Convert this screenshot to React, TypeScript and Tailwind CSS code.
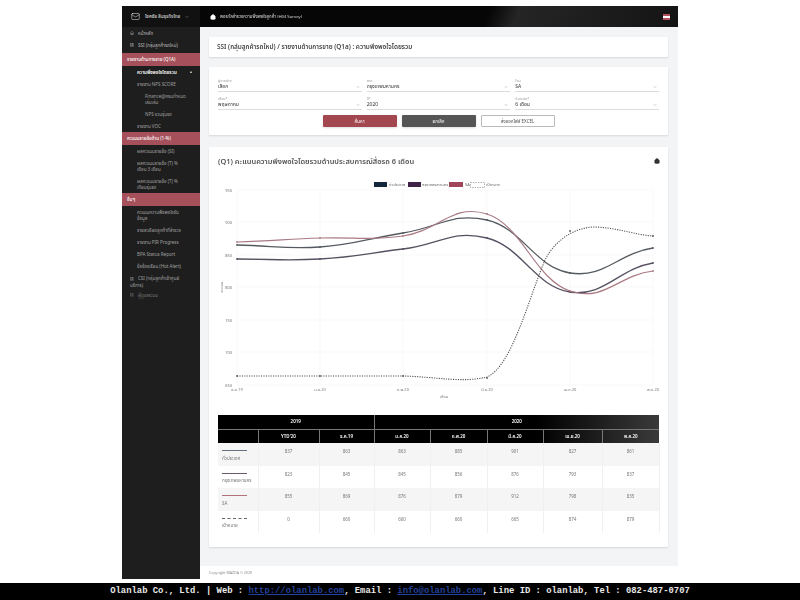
import { Home, ChevronDown, LayoutDashboard, Mail } from "lucide-react";

const font = "font-['Noto_Sans','Noto_Sans_Thai','Liberation_Sans',sans-serif]";

type Series = { color: string; width: number; dash?: string; pts: number[]; path?: string };

const xs = [237, 320, 403, 487, 570, 653];
const series: Series[] = [
  { color: "#555a60", width: 1.3, pts: [245, 247, 233, 220, 273, 248] },
  { color: "#575060", width: 1.3, pts: [259, 259, 249, 238, 292, 263] },
  { color: "#aa7a84", width: 1.2, pts: [242, 238, 236, 214, 291, 271] },
  {
    color: "#555555",
    width: 1.1,
    dash: "1.2 1.2",
    pts: [376, 376, 376, 378, 231, 236],
    path: "M237 376 L403 376 C438 377 462 383 487 377 C512 366 528 300 545 260 C555 240 574 228 593 227 C615 227 635 235 653 236",
  },
];

const yTicks = [
  { y: 190, label: "950" },
  { y: 222, label: "900" },
  { y: 255, label: "850" },
  { y: 287, label: "800" },
  { y: 320, label: "750" },
  { y: 352, label: "700" },
  { y: 385, label: "650" },
];
const xLabels = ["ธ.ค.19", "ม.ค.20", "ก.พ.20", "มี.ค.20", "เม.ย.20", "พ.ค.20"];

function curve(pts: number[]): string {
  let d = `M${xs[0]} ${pts[0]}`;
  for (let i = 0; i < pts.length - 1; i++) {
    const prev = pts[Math.max(i - 1, 0)];
    const next = pts[Math.min(i + 2, pts.length - 1)];
    const t = 0.2;
    const c1y = pts[i] + (pts[i + 1] - prev) * t;
    const c2y = pts[i + 1] - (next - pts[i]) * t;
    const dx = (xs[i + 1] - xs[i]) * 0.42;
    d += ` C${xs[i] + dx} ${c1y} ${xs[i + 1] - dx} ${c2y} ${xs[i + 1]} ${pts[i + 1]}`;
  }
  return d;
}

function Chart() {
  return (
    <svg viewBox="218 176 450 232" className="block h-[232px] w-[450px]">
      {yTicks.map((t) => (
        <g key={t.y}>
          <line x1={237} x2={653} y1={t.y} y2={t.y} stroke="#f2f2f2" strokeWidth={0.5} />
          <text x={232} y={t.y + 1.5} textAnchor="end" fontSize={4} fill="#777">
            {t.label}
          </text>
        </g>
      ))}
      {xs.map((x, i) => (
        <g key={x}>
          <line x1={x} x2={x} y1={190} y2={385} stroke="#f2f2f2" strokeWidth={0.5} />
          <text x={x} y={391} textAnchor="middle" fontSize={4} fill="#777">
            {xLabels[i]}
          </text>
        </g>
      ))}
      <text x={444} y={398} textAnchor="middle" fontSize={4} fill="#777">
        เดือน
      </text>
      <text x={223} y={287} textAnchor="middle" fontSize={4} fill="#777" transform="rotate(-90 223 287)">
        คะแนน
      </text>

      <rect x={374} y={182} width={13} height={5} fill="#14283c" />
      <text x={389} y={186} fontSize={4} fill="#666">ทั่วประเทศ</text>
      <rect x={408} y={182} width={13} height={5} fill="#3f2347" />
      <text x={422} y={186} fontSize={4} fill="#666">กรุงเทพมหานคร</text>
      <rect x={449} y={182} width={14} height={5} fill="#a1465a" />
      <text x={465} y={186} fontSize={4} fill="#666">SA</text>
      <rect x={470.5} y={182.5} width={14} height={5} fill="none" stroke="#666" strokeWidth={0.5} strokeDasharray="1.5 1" />
      <text x={486} y={186} fontSize={4} fill="#666">เป้าหมาย</text>

      {series.map((s) => (
        <g key={s.color + s.pts[0]}>
          <path d={s.path ?? curve(s.pts)} fill="none" stroke={s.color} strokeWidth={s.width} strokeDasharray={s.dash} />
          {s.pts.map((p, i) => (
            <circle key={xs[i]} cx={xs[i]} cy={p} r={0.9} fill={s.color} />
          ))}
        </g>
      ))}
    </svg>
  );
}

const rows = [
  { name: "ทั่วประเทศ", line: "border-[#667080]", vals: [837, 863, 863, 885, 901, 827, 861] },
  { name: "กรุงเทพมหานคร", line: "border-[#665a70]", vals: [823, 845, 845, 856, 876, 793, 837] },
  { name: "SA", line: "border-[#b0707c]", vals: [855, 869, 876, 879, 912, 798, 835] },
  { name: "เป้าหมาย", line: "border-dashed border-[#666]", vals: [0, 660, 660, 660, 665, 874, 879] },
];

const colWidths = ["w-[40px]", "w-[61px]", "w-[55px]", "w-[56px]", "w-[57px]", "w-[56px]", "w-[59px]", "w-[57px]"];

function ScoreTable() {
  const heads = ["YTD'20", "ธ.ค.19", "ม.ค.20", "ก.พ.20", "มี.ค.20", "เม.ย.20", "พ.ค.20"];
  return (
    <table className="w-[441px] table-fixed border-collapse text-center text-[4.5px]">
      <colgroup>
        {colWidths.map((w, i) => (
          <col key={i} className={w} />
        ))}
      </colgroup>
      <thead className="text-white">
        <tr className="h-[14px] bg-[linear-gradient(90deg,#000_72%,#3a3a3a)]">
          <th colSpan={3} className="border-r border-[#777] font-semibold">2019</th>
          <th colSpan={5} className="font-semibold">2020</th>
        </tr>
        <tr className="h-[14px] border-t border-[#777] bg-[linear-gradient(90deg,#000_72%,#3a3a3a)]">
          <th className="border-r border-[#777]" />
          {heads.map((h) => (
            <th key={h} className="border-r border-[#777] font-semibold last:border-r-0">{h}</th>
          ))}
        </tr>
      </thead>
      <tbody className="text-[#777]">
        {rows.map((r) => (
          <tr key={r.name} className="h-[22.5px] odd:bg-[#f5f5f5]">
            <td className="border-r border-[#f0f0f0] px-1 pt-[7px] text-left align-top">
              <div className={`w-[25px] border-t-[0.75px] ${r.line}`} />
              <div className="mt-[4.5px] leading-[5px]">{r.name}</div>
            </td>
            {r.vals.map((v, i) => (
              <td key={i} className="border-r border-[#f0f0f0] pt-[6px] align-top leading-[5px]">{v}</td>
            ))}
          </tr>
        ))}
      </tbody>
    </table>
  );
}

function Field({ label, value }: { label: string; value: string }) {
  return (
    <div className="flex h-[18px] flex-col justify-end border-b border-[#dcdcdc] pb-[1px]">
      <div className="text-[3.6px] leading-[5px] text-[#999]">{label}</div>
      <div className="flex items-center justify-between pr-[2px] text-[5px] leading-[7px] text-[#333]">
        {value}
        <ChevronDown className="h-[4px] w-[4px] text-[#777]" />
      </div>
    </div>
  );
}

function SideBand({ children }: { children: string }) {
  return (
    <div className="flex h-[13px] items-center bg-[#a5505a] pl-[5px] text-[4.5px] font-medium text-white">
      {children}
    </div>
  );
}

function SideItem({ lines, indent = "pl-[15px]", active }: { lines: string[]; indent?: string; active?: boolean }) {
  return (
    <div className={`py-[3px] pr-[8px] leading-[6px] ${indent} ${active ? "flex justify-between font-semibold text-white" : "text-[#a0a0a0]"}`}>
      {lines.map((l) => (
        <div key={l}>{l}</div>
      ))}
      {active && <span className="text-[5px]">•</span>}
    </div>
  );
}

function Sidebar() {
  return (
    <aside className="flex w-[78px] shrink-0 flex-col overflow-hidden bg-[#1e1e1e] text-[4.5px]">
      <div className="flex h-[21px] shrink-0 items-center gap-[5px] bg-[#111] pl-[9px] text-[#ddd]">
        <Mail className="h-[9px] w-[9px]" strokeWidth={1.5} />
        <span className="font-medium">โชคชัย ลีนธุรกิจไทย</span>
        <ChevronDown className="h-[4px] w-[4px]" />
      </div>
      <div className="flex h-[12px] items-center gap-[4px] pl-[8px] text-[#bbb]">
        <Home className="h-[4px] w-[4px]" />
        หน้าหลัก
      </div>
      <div className="mb-[2px] flex h-[12px] items-center gap-[4px] pl-[8px] text-[#bbb]">
        <LayoutDashboard className="h-[4px] w-[4px]" />
        SSI (กลุ่มลูกค้ารถใหม่)
      </div>
      <SideBand>รายงานด้านการขาย (Q1A)</SideBand>
      <SideItem lines={["ความพึงพอใจโดยรวม"]} active />
      <SideItem lines={["รายงาน NPS SCORE"]} />
      <SideItem lines={["Finance@ครบกำหนด", "เล่มเล่ม"]} indent="pl-[23px]" />
      <SideItem lines={["NPS รวมรุ่นรถ"]} indent="pl-[23px]" />
      <SideItem lines={["รายงาน VOC"]} />
      <SideBand>คะแนนรายข้อด้าน (1-%)</SideBand>
      <SideItem lines={["ผลคะแนนรายข้อ (SI)"]} />
      <SideItem lines={["ผลคะแนนรายข้อ (T) %", "เดือน 3 เดือน"]} />
      <SideItem lines={["ผลคะแนนรายข้อ (T) %", "เทียบรุ่นรถ"]} />
      <SideBand>อื่นๆ</SideBand>
      <SideItem lines={["คะแนนความพึงพอใจรับ", "ข้อมูล"]} />
      <SideItem lines={["รายละเอียดลูกค้าที่สำรวจ"]} />
      <SideItem lines={["รายงาน PIR Progress"]} />
      <SideItem lines={["BPA Status Report"]} />
      <SideItem lines={["ข้อร้องเรียน (Hot Alert)"]} />
      <div className="mt-[3px] pl-[8px] pr-[8px] leading-[7px] text-[#a0a0a0]">
        <LayoutDashboard className="mr-[4px] inline h-[4px] w-[4px]" />
        CSI (กลุ่มลูกค้าเข้าศูนย์บริการ)
      </div>
      <div className="mt-[3px] flex items-center gap-[4px] pl-[8px] leading-[6px] text-[#777]">
        <LayoutDashboard className="h-[4px] w-[4px] shrink-0" />
        ผู้ดูแลระบบ
      </div>
    </aside>
  );
}

function Card({ className, children }: { className: string; children: React.ReactNode }) {
  return <section className={`rounded-[1px] bg-white shadow-[0_1px_2px_rgba(0,0,0,0.12)] ${className}`}>{children}</section>;
}

export default function App() {
  return (
    <div className={`flex h-[600px] w-[800px] flex-col overflow-hidden bg-white pt-[6px] ${font}`}>
      <div className="ml-[122px] flex h-[573px] w-[556px] blur-[0.45px]">
        <Sidebar />
        <div className="flex min-w-0 flex-1 flex-col">
          <header className="flex h-[21px] shrink-0 items-center justify-between bg-[linear-gradient(112deg,#060606_60%,#252525_66%,#141414_100%)] pl-[10px] pr-[8px] text-[4.3px] text-[#ddd]">
            <div className="flex items-center gap-[4px]">
              <Home className="h-[6px] w-[6px] fill-white text-white" />
              พอรทัลสำรวจความพึงพอใจลูกค้า (HGI Survey)
            </div>
            <div className="flex h-[6px] w-[7px] flex-col">
              <div className="h-[2px] bg-[#b0505a]" />
              <div className="h-[2px] bg-white" />
              <div className="h-[2px] bg-[#b0505a]" />
            </div>
          </header>
          <main className="flex h-[539px] flex-col bg-[#f3f4f6] pl-[9px] pr-[10px] pt-[10px]">
            <Card className="mb-[10px] flex h-[20px] shrink-0 items-center pl-[8px] text-[6.4px] font-semibold text-[#444]">
              SSI (กลุ่มลูกค้ารถใหม่) / รายงานด้านการขาย (Q1a) : ความพึงพอใจโดยรวม
            </Card>
            <Card className="mb-[12px] h-[68px] shrink-0 px-[9px] pt-[7px]">
              <div className="grid grid-cols-3 gap-x-[5px] gap-y-0">
                <Field label="ผู้จำหน่าย" value="เลือก" />
                <Field label="ภาค" value="กรุงเทพมหานคร" />
                <Field label="โซน" value="SA" />
                <Field label="เดือน*" value="พฤษภาคม" />
                <Field label="ปี*" value="2020" />
                <Field label="ช่วงเวลา*" value="6 เดือน" />
              </div>
              <div className="mt-[5px] flex justify-center gap-[5px] text-[4.5px]">
                <button className="h-[12px] w-[74px] rounded-[1px] bg-[#a2474f] text-white shadow-sm">ค้นหา</button>
                <button className="h-[12px] w-[74px] rounded-[1px] bg-[#555] text-white shadow-sm">ยกเลิก</button>
                <button className="h-[12px] w-[74px] rounded-[1px] border border-[#bbb] bg-white text-[#555]">ส่งออกไฟล์ EXCEL</button>
              </div>
            </Card>
            <Card className="h-[400px] shrink-0 pl-[9px] pt-[7px]">
              <div className="flex items-center justify-between pr-[8px] pt-[1px]">
                <h2 className="text-[7.45px] font-semibold leading-[12px] text-[#555]">(Q1) คะแนนความพึงพอใจโดยรวมด้านประสบการณ์สื่อรถ 6 เดือน</h2>
                <Home className="h-[6px] w-[6px] fill-[#333] text-[#333]" />
              </div>
              <div className="mt-[9px]">
                <Chart />
              </div>
              <div className="mt-[7px]">
                <ScoreTable />
              </div>
            </Card>
          </main>
          <footer className="flex h-[13px] items-center pl-[9px] text-[3.6px] text-[#888]">Copyright MAZDA © 2020</footer>
        </div>
      </div>
      <div className="mt-[4px] flex h-[17px] items-center justify-center bg-black font-['Liberation_Mono',monospace] text-[8.87px] font-bold text-[#e8e8e8]">
        <span>
          Olanlab Co., Ltd. | Web : <a className="text-[#24409a] underline" href="#">http://olanlab.com</a>, Email : <a className="text-[#24409a] underline" href="#">info@olanlab.com</a>, Line ID : olanlab, Tel : 082-487-0707
        </span>
      </div>
    </div>
  );
}
